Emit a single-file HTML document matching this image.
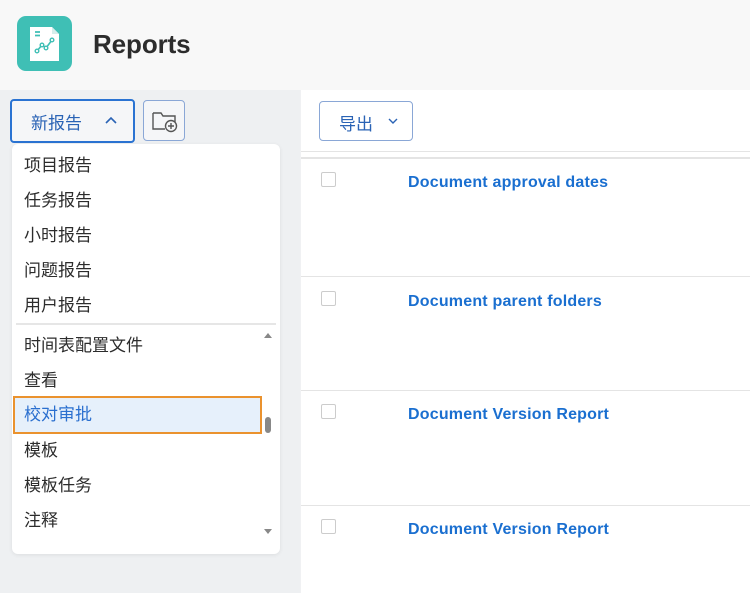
<!DOCTYPE html>
<html><head><meta charset="utf-8"><style>
*{margin:0;padding:0;box-sizing:border-box}
body{width:750px;height:593px;overflow:hidden;background:#f0f1f3;font-family:"Liberation Sans","Noto Sans CJK SC",sans-serif;position:relative}
.hdr{position:absolute;left:0;top:0;width:750px;height:90px;background:#f8f8f8}
.logo{position:absolute;left:17px;top:16px;width:55px;height:55px;border-radius:9px;background:#3fbfb5}
.title{position:absolute;left:93px;top:29px;font-size:26px;font-weight:bold;color:#2c2c2c;letter-spacing:-0.1px}
.side{position:absolute;left:0;top:90px;width:300px;height:503px;background:#eef0f2}
.main{position:absolute;left:301px;top:90px;width:449px;height:503px;background:#fff}
.btn{position:absolute;border-radius:4px;background:#f5f6f8}
.menu{position:absolute;left:12px;top:144px;width:268px;height:410px;background:#fff;border-radius:6px;box-shadow:0 1px 4px rgba(0,0,0,.08)}
.it{position:absolute;left:12px;font-size:17px;color:#2c2c2c;line-height:20px}
.line{position:absolute;left:301px;width:449px;height:1px;background:#e4e4e4}
.cb{position:absolute;left:321px;width:15px;height:15px;border:1px solid #ccc;border-radius:2px}
.lk{position:absolute;left:408px;font-size:16px;font-weight:bold;color:#1a6fd0;letter-spacing:0.2px}
</style></head><body>
<div class="hdr"></div>
<div class="logo"><svg width="55" height="55" viewBox="0 0 55 55"><path d="M13 11h22l7 7v27H13z" fill="#fff"/><path d="M35 11v7h7" fill="#d6eeec"/><path d="M18 16h5M18 19.5h5" stroke="#3fbfb5" stroke-width="1.8"/><path d="M20 35l5-6 4 3 6-8" stroke="#3fbfb5" stroke-width="1.6" fill="none"/><g fill="#fff" stroke="#3fbfb5" stroke-width="1.4"><circle cx="20" cy="35" r="1.8"/><circle cx="25" cy="29" r="1.8"/><circle cx="29" cy="32" r="1.8"/><circle cx="35" cy="24" r="1.8"/></g></svg></div>
<div class="title">Reports</div>
<div class="side"></div>
<div class="main"></div>
<div class="btn" style="left:10px;top:99px;width:125px;height:44px;border:2px solid #2a73d2"></div>
<div style="position:absolute;left:31px;top:109px;font-size:17px;color:#2a63b5">新报告</div>
<svg style="position:absolute;left:104px;top:116px" width="14" height="10"><path d="M2 7l5-5 5 5" stroke="#2a63b5" stroke-width="1.6" fill="none"/></svg>
<div class="btn" style="left:143px;top:100px;width:42px;height:41px;border:1px solid #8aa7d6"></div>
<svg style="position:absolute;left:151px;top:107px" width="28" height="28" viewBox="0 0 28 28"><path d="M2 6h8l2 3h12v6M14 22H2V6" stroke="#555" stroke-width="1.4" fill="none"/><circle cx="20" cy="19" r="5.5" fill="#f5f6f8" stroke="#555" stroke-width="1.4"/><path d="M20 16v6M17 19h6" stroke="#555" stroke-width="1.4"/></svg>
<div class="menu">
<div class="it" style="top:12px">项目报告</div>
<div class="it" style="top:47px">任务报告</div>
<div class="it" style="top:82px">小时报告</div>
<div class="it" style="top:117px">问题报告</div>
<div class="it" style="top:152px">用户报告</div>
<div style="position:absolute;left:4px;top:179px;width:260px;height:2px;background:#e6e6e6"></div>
<div class="it" style="top:192px">时间表配置文件</div>
<div class="it" style="top:227px">查看</div>
<div style="position:absolute;left:1px;top:252px;width:249px;height:38px;background:#e6f0fb;border:2px solid #ea922e"></div>
<div class="it" style="top:261px;color:#2a6fcf">校对审批</div>
<div class="it" style="top:297px">模板</div>
<div class="it" style="top:332px">模板任务</div>
<div class="it" style="top:367px">注释</div>
<div style="position:absolute;left:252px;top:189px;width:0;height:0;border-left:4px solid transparent;border-right:4px solid transparent;border-bottom:5px solid #888"></div>
<div style="position:absolute;left:253px;top:273px;width:6px;height:16px;border-radius:3px;background:#888"></div>
<div style="position:absolute;left:252px;top:385px;width:0;height:0;border-left:4px solid transparent;border-right:4px solid transparent;border-top:5px solid #888"></div>
</div>
<div class="btn" style="left:319px;top:101px;width:94px;height:40px;border:1px solid #8aa7d6;background:#fff"></div>
<div style="position:absolute;left:339px;top:110px;font-size:17px;color:#2a63b5">导出</div>
<svg style="position:absolute;left:387px;top:117px" width="12" height="9"><path d="M2 2l4 4 4-4" stroke="#2a63b5" stroke-width="1.4" fill="none"/></svg>
<div class="line" style="top:151px"></div>
<div class="line" style="top:157px;height:2px"></div>
<div class="line" style="top:276px"></div>
<div class="line" style="top:390px"></div>
<div class="line" style="top:505px"></div>
<div class="cb" style="top:172px"></div><div class="lk" style="top:174px">Document approval dates</div>
<div class="cb" style="top:291px"></div><div class="lk" style="top:293px">Document parent folders</div>
<div class="cb" style="top:404px"></div><div class="lk" style="top:406px">Document Version Report</div>
<div class="cb" style="top:519px"></div><div class="lk" style="top:521px">Document Version Report</div>
</body></html>
